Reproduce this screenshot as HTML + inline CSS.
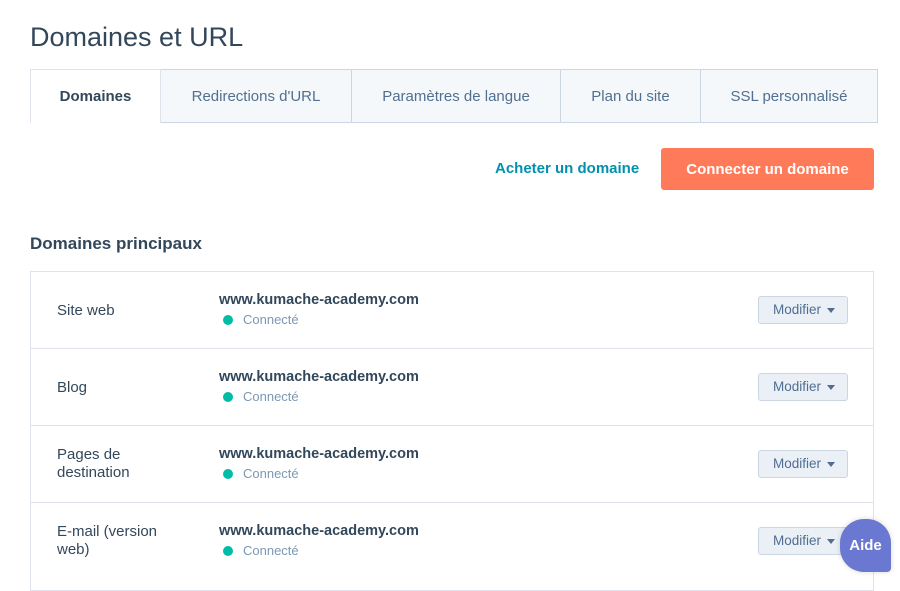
<!DOCTYPE html>
<html><head><meta charset="utf-8"><style>
*{box-sizing:border-box;margin:0;padding:0}
body{width:900px;height:579px;overflow:hidden;background:#fff;font-family:"Liberation Sans",sans-serif;color:#33475b;position:relative}
h1{position:absolute;left:30px;top:22px;font-size:27px;font-weight:300;color:#33475b}
.tabs{position:absolute;left:30px;top:69px;width:848px;height:54px;display:flex}
.tab{height:54px;border:1px solid #cbd6e2;border-left:none;background:#f5f8fa;color:#516f90;font-size:15px;display:flex;align-items:center;justify-content:center}
.tab.a{background:#fff;border-left:1px solid #dfe3eb;border-bottom:none;color:#33475b;font-weight:bold;border-color:#dfe3eb}
.buy{position:absolute;left:495px;top:160px;font-size:15px;font-weight:bold;color:#0091ae}
.conn{position:absolute;left:661px;top:148px;width:213px;height:42px;background:#ff7a59;border-radius:3px;color:#fff;font-size:15px;font-weight:bold;display:flex;align-items:center;justify-content:center}
h2{position:absolute;left:30px;top:234px;font-size:17px;font-weight:bold;color:#33475b}
.tbl{position:absolute;left:30px;top:271px;width:844px;height:320px;border:1px solid #dfe3eb}
.row{position:absolute;left:0;width:842px;height:77px;border-bottom:1px solid #dfe3eb}
.lab{position:absolute;left:26px;font-size:15px;color:#33475b;line-height:18px}
.dom{position:absolute;left:188px;top:20px;font-size:14.5px;font-weight:bold;color:#33475b}
.st{position:absolute;left:193px;top:40px;font-size:13px;color:#7c98b6}
.st:before{content:"";position:absolute;left:-1px;top:3px;width:10px;height:10px;border-radius:50%;background:#00bda5}
.st span{margin-left:19px}
.mod{position:absolute;left:727px;top:24px;width:90px;height:28px;background:#eaf0f6;border:1px solid #cbd6e2;border-radius:3px;font-size:13.5px;color:#506e91;padding-left:14px;line-height:26px}
.mod:after{content:"";position:absolute;right:12px;top:11px;border:4px solid transparent;border-top:5px solid #506e91;border-bottom:none}
.aide{position:absolute;left:840px;top:519px;width:51px;height:53px;background:#6a78d1;border-radius:24px 24px 4px 24px;color:#fff;font-size:15px;font-weight:bold;display:flex;align-items:center;justify-content:center;box-shadow:0 0 6px rgba(0,0,0,.15)}
</style></head><body>
<h1>Domaines et URL</h1>
<div class="tabs">
<div class="tab a" style="width:131px">Domaines</div>
<div class="tab" style="width:191px">Redirections d'URL</div>
<div class="tab" style="width:209px">Paramètres de langue</div>
<div class="tab" style="width:140px">Plan du site</div>
<div class="tab" style="width:177px">SSL personnalisé</div>
</div>
<div class="buy">Acheter un domaine</div>
<div class="conn">Connecter un domaine</div>
<h2>Domaines principaux</h2>
<div class="tbl">
<div class="row" style="top:0"><div class="lab" style="top:30px">Site web</div><div class="dom">www.kumache-academy.com</div><div class="st"><span>Connecté</span></div><div class="mod">Modifier</div></div>
<div class="row" style="top:77px"><div class="lab" style="top:30px">Blog</div><div class="dom">www.kumache-academy.com</div><div class="st"><span>Connecté</span></div><div class="mod">Modifier</div></div>
<div class="row" style="top:154px"><div class="lab" style="top:20px">Pages de<br>destination</div><div class="dom">www.kumache-academy.com</div><div class="st"><span>Connecté</span></div><div class="mod">Modifier</div></div>
<div class="row" style="top:231px;border-bottom:none"><div class="lab" style="top:20px">E-mail (version<br>web)</div><div class="dom">www.kumache-academy.com</div><div class="st"><span>Connecté</span></div><div class="mod">Modifier</div></div>
</div>
<div class="aide">Aide</div>
</body></html>
